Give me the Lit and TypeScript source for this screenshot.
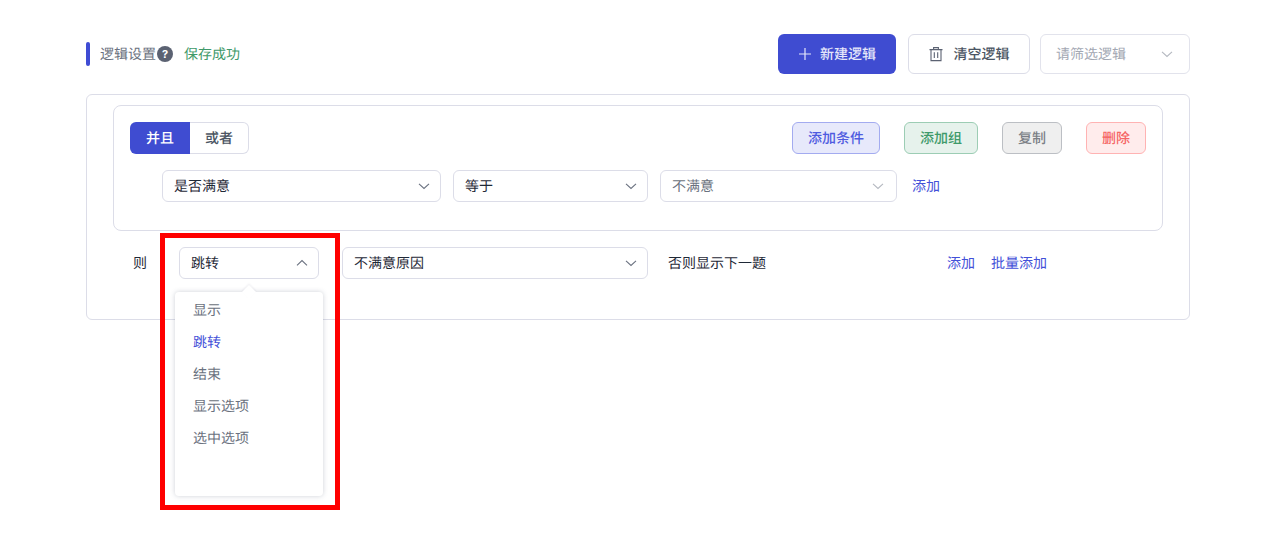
import { LitElement, html, css } from "lit";
import { customElement } from "lit/decorators.js";

const chev = (up = false, cls = "") => html`<svg class="chev ${cls}" width="14" height="14" viewBox="0 0 14 14" fill="none" stroke="currentColor" stroke-width="1.1"><path d=${up ? "M2 9.4 7 4.6l5 4.8" : "M2 4.8 7 9.4l5-4.6"} /></svg>`;

@customElement("app-root")
export class AppRoot extends LitElement {
  static styles = css`
    :host { display: block; height: 553px; position: relative; overflow: hidden; background: #fff;
      font-family: "Noto Sans CJK SC", Inter, sans-serif; font-size: 14px; color: #374151; text-rendering: geometricPrecision; }
    .page { padding: 34px 90px 0 86px; }
    .head { display: flex; align-items: center; height: 40px; }
    .bar { width: 4px; height: 24px; border-radius: 2px; background: #3f4cd4; margin-right: 10px; }
    .title { color: #6b7280; line-height: 20px; }
    .help { width: 16px; height: 16px; margin-left: 1px; border-radius: 50%; background: #5b6272; color: #fff; font-family: Inter, sans-serif; font-size: 11px; font-weight: 700; display: flex; align-items: center; justify-content: center; }
    .saved { color: #3f9a6a; margin-left: 11px; }
    .head-actions { margin-left: auto; display: flex; }
    .btn { height: 40px; box-sizing: border-box; border-radius: 6px; display: flex; align-items: center; justify-content: center; font-weight: 500; }
    .new { width: 118px; background: #3f4cd1; color: #e4e6fa; gap: 8px; margin-right: 12px; }
    .clear { width: 122px; border: 1px solid #dcdde8; background: #fff; color: #4b5563; gap: 10px; margin-right: 10px; }
    .clear svg { color: #5b6272; margin-left: -1px; }
    .filter { width: 150px; height: 40px; box-sizing: border-box; border: 1px solid #e2e3ec; border-radius: 6px; padding: 0 15px 0 15px; display: flex; align-items: center; justify-content: space-between; color: #a3a8b3; }
    .card { margin-top: 20px; height: 226px; box-sizing: border-box; border: 1px solid #dcdde8; border-radius: 6px; padding: 10px 26px 0; }
    .group { height: 126px; box-sizing: border-box; border: 1px solid #dcdde8; border-radius: 8px; padding: 16px 16px 0; }
    .top { display: flex; align-items: center; height: 32px; }
    .seg { display: flex; width: 119px; height: 32px; }
    .seg span { display: flex; align-items: center; justify-content: center; font-weight: 500; box-sizing: border-box; }
    .seg .on { width: 60px; background: #3f4cd1; color: #fff; border-radius: 6px 0 0 6px; }
    .seg .off { flex: 1; color: #4b5563; border: 1px solid #dcdde8; border-left: 0; border-radius: 0 6px 6px 0; }
    .acts { margin-left: auto; display: flex; gap: 24px; }
    .tag { height: 32px; box-sizing: border-box; border-radius: 6px; border: 1px solid; display: flex; align-items: center; justify-content: center; font-weight: 500; }
    .blue { width: 88px; background: #e7e9fb; border-color: #a3abf0; color: #4f5be0; }
    .green { width: 74px; background: #e6f2ec; border-color: #9ccdb4; color: #3f9a6a; }
    .gray { width: 60px; background: #efefef; border-color: #bcbfc4; color: #7b7f86; }
    .red { width: 60px; background: #ffecec; border-color: #ffb3b3; color: #f56565; }
    .row { display: flex; align-items: center; height: 32px; }
    .cond { margin-top: 16px; padding-left: 32px; }
    .sel { height: 32px; box-sizing: border-box; border: 1px solid #dcdde8; border-radius: 6px; padding: 0 9px 0 11px; display: flex; align-items: center; justify-content: space-between; color: #1f2937; background: #fff; }
    .chev { color: #6b7280; flex: none; }
    .pale { color: #b4b8c0; }
    .w279 { width: 279px; margin-right: 12px; }
    .w195 { width: 195px; margin-right: 12px; }
    .w237 { width: 237px; margin-right: 15px; color: #6b7280; padding-right: 11px; }
    .link { color: #4350d8; }
    .then { margin-top: 16px; }
    .then .lab { width: 66px; padding-left: 20px; box-sizing: border-box; color: #1f2937; }
    .w140 { width: 140px; margin-right: 23px; }
    .w306 { width: 306px; margin-right: 20px; }
    .else { width: 279px; color: #1f2937; }
    .then .link + .link { margin-left: 16px; }
    .menu { position: absolute; left: 175px; top: 292px; width: 148px; height: 204px; box-sizing: border-box; background: #fff; border-radius: 4px; padding-top: 2px; box-shadow: 0 0 5px rgba(60, 70, 100, 0.25); }
    .menu::before { content: ""; position: absolute; left: 69px; top: -5px; width: 10px; height: 10px; background: #fff; transform: rotate(45deg); box-shadow: -1px -1px 2px rgba(60, 70, 100, 0.08); }
    .item { position: relative; height: 32px; line-height: 32px; padding-left: 18px; color: #6b7280; }
    .item.active { color: #4350d8; }
    .mark { position: absolute; left: 160px; top: 233px; width: 180px; height: 277px; box-sizing: border-box; border: 5px solid #f00; pointer-events: none; }
  `;

  render() {
    return html`
      <div class="page">
        <div class="head">
          <div class="bar"></div>
          <span class="title">逻辑设置</span>
          <span class="help">?</span>
          <span class="saved">保存成功</span>
          <div class="head-actions">
            <div class="btn new">
              <svg width="14" height="14" viewBox="0 0 14 14" stroke="currentColor" stroke-width="1.2" fill="none"><path d="M7 1v12M1 7h12" /></svg>
              <span>新建逻辑</span>
            </div>
            <div class="btn clear">
              <svg width="16" height="16" viewBox="0 0 16 16" stroke="currentColor" stroke-width="1.1" fill="none"><path d="M1.5 3.6h13M5.6 3.6V1.6h4.8v2M3 3.6v11h10v-11M6.3 6.3v5.6M9.7 6.3v5.6" /></svg>
              <span>清空逻辑</span>
            </div>
            <div class="filter"><span>请筛选逻辑</span>${chev(false, "pale")}</div>
          </div>
        </div>
        <div class="card">
          <div class="group">
            <div class="top">
              <div class="seg"><span class="on">并且</span><span class="off">或者</span></div>
              <div class="acts">
                <div class="tag blue">添加条件</div>
                <div class="tag green">添加组</div>
                <div class="tag gray">复制</div>
                <div class="tag red">删除</div>
              </div>
            </div>
            <div class="row cond">
              <div class="sel w279"><span>是否满意</span>${chev()}</div>
              <div class="sel w195"><span>等于</span>${chev()}</div>
              <div class="sel w237"><span>不满意</span>${chev(false, "pale")}</div>
              <span class="link">添加</span>
            </div>
          </div>
          <div class="row then">
            <span class="lab">则</span>
            <div class="sel w140"><span>跳转</span>${chev(true)}</div>
            <div class="sel w306"><span>不满意原因</span>${chev()}</div>
            <span class="else">否则显示下一题</span>
            <span class="link">添加</span>
            <span class="link">批量添加</span>
          </div>
        </div>
      </div>
      <div class="menu">
        <div class="item">显示</div>
        <div class="item active">跳转</div>
        <div class="item">结束</div>
        <div class="item">显示选项</div>
        <div class="item">选中选项</div>
      </div>
      <div class="mark"></div>
    `;
  }
}
